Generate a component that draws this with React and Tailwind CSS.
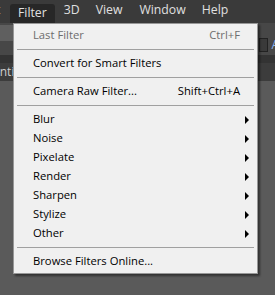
const font = { fontFamily: '"Open Sans", "Noto Sans", sans-serif' };

const items = [
  { label: 'Last Filter', shortcut: 'Ctrl+F', disabled: true },
  { sep: true },
  { label: 'Convert for Smart Filters' },
  { sep: true },
  { label: 'Camera Raw Filter...', shortcut: 'Shift+Ctrl+A' },
  { sep: true },
  { label: 'Blur', sub: true },
  { label: 'Noise', sub: true },
  { label: 'Pixelate', sub: true },
  { label: 'Render', sub: true },
  { label: 'Sharpen', sub: true },
  { label: 'Stylize', sub: true },
  { label: 'Other', sub: true },
  { sep: true },
  { label: 'Browse Filters Online...' },
];

const Arrow = () => (
  <svg width="5" height="8" viewBox="0 0 5 8" className="block">
    <path d="M0 0 L4 4 L0 8 Z" fill="#000" />
  </svg>
);

const MenuItem = ({ item }) => {
  if (item.sep) {
    return (
      <div className="h-[9px] flex items-center px-[3px]">
        <div className="w-full h-px bg-[#a0a0a0]" />
      </div>
    );
  }
  return (
    <div
      className={`h-[19px] flex items-center pl-[19px] pr-[17px] text-[11.25px] ${
        item.disabled ? 'text-[#6d6d6d]' : 'text-black'
      }`}
    >
      <span className="flex-1 whitespace-nowrap">{item.label}</span>
      {item.shortcut && <span className="whitespace-nowrap">{item.shortcut}</span>}
      {item.sub && (
        <span className="-mr-[10px]">
          <Arrow />
        </span>
      )}
    </div>
  );
};

export default function App() {
  return (
    <div className="relative w-[275px] h-[295px] overflow-hidden bg-[#5a5a5a]" style={font}>
      {/* menu bar */}
      <div className="h-[23px] bg-[#3a3a3a] flex items-end text-[12.25px] text-[#e0e0e0]">
        <span className="w-[14px] -ml-[4px] pb-[4px]">t</span>
        <span className="h-[19px] pl-[8px] pr-[8px] rounded-t-[3px] bg-[#272727] flex items-center">Filter</span>
        <span className="pl-[9px] pr-[8px] pb-[4px]">3D</span>
        <span className="pl-[8px] pr-[8px] pb-[4px]">View</span>
        <span className="pl-[9px] pr-[8px] pb-[4px]">Window</span>
        <span className="pl-[8px] pr-[8px] pb-[4px]">Help</span>
      </div>

      {/* options bar */}
      <div className="h-[32px] bg-[#474747] flex items-start justify-between">
        <div className="w-[13px] h-[16px] mt-[2px] bg-[#5f5f5f]" />
        <div className="flex items-center gap-[3px] mt-[13px] mr-[-4px]">
          <div className="w-[9px] h-[14px] border border-[#222] bg-[#3a3a3a]" />
          <span className="text-[12px] text-[#8ab4f0]">A</span>
        </div>
      </div>
      <div className="h-[8px] bg-[#333333]" />

      {/* document tab row */}
      <div className="h-[18px] bg-[#3c3c3c] flex items-center text-[12px] text-[#cfcfcf]">
        <span className="-ml-[9px] whitespace-nowrap">Untitled-1</span>
      </div>

      {/* filter menu */}
      <div className="absolute left-[13px] top-[23px] w-[245px] bg-[#f0f0f0] border border-[#979797] py-[2px] shadow-[2px_2px_2px_rgba(0,0,0,0.45)]">
        {items.map((item, i) => (
          <MenuItem key={i} item={item} />
        ))}
      </div>
    </div>
  );
}
